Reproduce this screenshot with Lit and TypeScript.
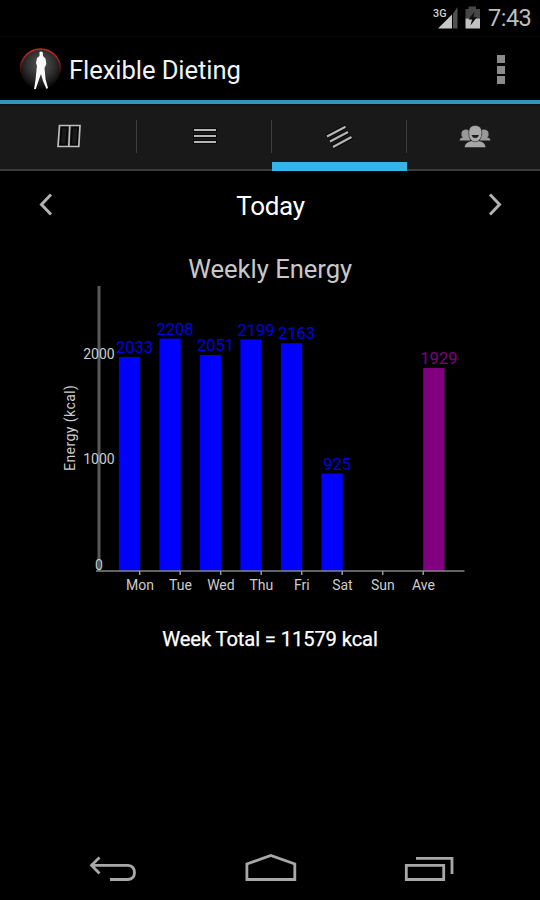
import { LitElement, html, svg, css } from "lit";
import { customElement, property } from "lit/decorators.js";

interface Bar {
  day: string;
  kcal: number;
  average?: boolean;
}

const WEEK: Bar[] = [
  { day: "Mon", kcal: 2033 },
  { day: "Tue", kcal: 2208 },
  { day: "Wed", kcal: 2051 },
  { day: "Thu", kcal: 2199 },
  { day: "Fri", kcal: 2163 },
  { day: "Sat", kcal: 925 },
  { day: "Sun", kcal: 0 },
  { day: "Ave", kcal: 1929, average: true },
];

@customElement("status-bar")
class StatusBar extends LitElement {
  static styles = css`
    :host {
      display: flex;
      justify-content: flex-end;
      align-items: center;
      height: 37px;
      box-sizing: border-box;
      padding-right: 8px;
      border-bottom: 1px solid #070707;
      color: #bebebe;
      font-size: 23.5px;
      line-height: 37px;
    }
    .icons { display: block; flex: none; }
    .net { font-size: 11.5px; font-weight: 500; fill: #d0d0d0; }
    .time { width: 44px; margin-left: 6px; letter-spacing: -0.5px; white-space: nowrap; }
  `;
  render() {
    return html`
      <svg class="icons" width="50" height="37" viewBox="432 0 50 37">
        <path d="M438 28.5 452 14.5V28.5Z" fill="#c6c6c6" />
        <path d="M453 13.5 457.5 7V28.5H453Z" fill="#505050" />
        <text class="net" x="433" y="16.500" textLength="13.500" lengthAdjust="spacingAndGlyphs">3G</text>
        <path d="M465.500 9H468.500V6.500H476V9H480V18.500H465.500Z" fill="#464646" />
        <path d="M465.500 18.500H480V28.500H465.500Z" fill="#c2c2c2" />
        <path d="M474.500 11.500 468.500 19.500H472L470.500 25.500 477 17H473.500Z" fill="#101010" />
      </svg>
      <span class="time">7:43</span>
    `;
  }
}

@customElement("title-bar")
class TitleBar extends LitElement {
  static styles = css`
    :host {
      display: flex;
      align-items: center;
      height: 67px;
      box-sizing: border-box;
      border-bottom: 4px solid #3197b8;
      padding: 0 35px 0 19px;
      color: #f2f2f2;
      font-size: 25.6px;
    }
    .logo { display: block; flex: none; }
    .name { flex: 1; margin-left: 7px; padding-top: 3px; letter-spacing: -0.08px; white-space: nowrap; }
    .more { display: grid; gap: 2.5px; padding-top: 2px; }
    .dot { width: 8px; height: 8px; background: #8b8b8b; }
  `;
  render() {
    return html`
      <svg class="logo" width="43" height="46" viewBox="19 46 43 46">
        <defs>
          <radialGradient id="disc" cx=".5" cy=".38" r=".62">
            <stop offset="0" stop-color="#565656" />
            <stop offset=".55" stop-color="#303030" />
            <stop offset="1" stop-color="#060606" />
          </radialGradient>
          <linearGradient id="rim" x1="0" y1="0" x2="0" y2="1">
            <stop offset="0" stop-color="#c92a28" />
            <stop offset=".35" stop-color="#851a1a" />
            <stop offset=".75" stop-color="#200" stop-opacity="0" />
          </linearGradient>
        </defs>
        <circle cx="40.500" cy="69" r="20" fill="url(#disc)" stroke="url(#rim)" stroke-width="1.600" />
        <path
          d="M39.500 52Q41.500 51 42.800 52.500L43 56 45.500 58.500 46.300 64 44.500 68 45 73 45.500 79 48 88 46.500 89 43 81 41 74 38.800 80 35.800 89 34 89.300 35.500 80 36.500 70 37 66 36 63 37 58 39.500 56Z"
          fill="#fafafa"
        />
      </svg>
      <span class="name">Flexible Dieting</span>
      <div class="more"><div class="dot"></div><div class="dot"></div><div class="dot"></div></div>
    `;
  }
}

@customElement("tab-strip")
class TabStrip extends LitElement {
  @property({ type: Number }) selected = 2;

  static styles = css`
    :host {
      display: grid;
      grid-template-columns: repeat(4, 1fr);
      height: 67px;
      box-sizing: border-box;
      border-bottom: 2px solid #3c3c3c;
      background: linear-gradient(#0c0e0f, #191919 3px);
    }
    .tab { position: relative; display: flex; justify-content: center; padding: 16px 0 0 5px; }
    .tab + .tab::before {
      content: "";
      position: absolute;
      left: 1px;
      top: 16px;
      width: 1px;
      height: 33px;
      background: #3d3d3d;
    }
    .tab.on::after {
      content: "";
      position: absolute;
      left: 2px;
      right: -1.5px;
      bottom: -2px;
      height: 9px;
      background: #33b5e5;
    }
    svg { display: block; }
  `;
  render() {
    const icons = [
      svg`<g fill="none" stroke="#bcbcbc" stroke-width="1.700">
        <path d="M9.500 8.500 8.300 25.500H14.200L15.300 8.500ZM20.200 8.500 19.200 25.500H25L26 8.500Z" stroke="#070707" stroke-width="1.500" />
        <path d="M7.500 6.500H28L26.800 27.500H6Z M17.800 6.500 16.800 27.500" />
      </g>`,
      svg`<path d="M6 11H30M6 17H30M6 23H30" stroke="#0a0a0a" stroke-width="4" />
        <path d="M7 11H29M7 17H29M7 23H29" stroke="#b5b5b5" stroke-width="2" />`,
      svg`<path d="M4.500 17.500 24 7.500M7.500 22.500 26.500 13M10.500 28 30 18" stroke="#0a0a0a" stroke-width="4.500" />
        <path d="M5 17.500 23.500 7.700M8 22.500 26 13M11 28 29.500 18" stroke="#b5b5b5" stroke-width="2.200" />`,
      svg`<g fill="#999">
        <path d="M2.500 21.500Q3 18.500 6 18.500L4.500 17Q3.500 10.500 9 10.500Q13 10.500 13 16V21.500Z" />
        <path d="M33.500 21.500Q33 18.500 30 18.500L31.500 17Q32.500 10.500 27 10.500Q23 10.500 23 16V21.500Z" />
        <path d="M7.500 28.200Q8.500 23 15 22H21.500Q28 23 28.500 28.200Z" fill="#a6a6a6" />
        <path d="M18.200 6.500Q24.800 6.500 24.800 13.500Q24.800 22.800 18.200 22.800Q11.700 22.800 11.700 13.500Q11.700 6.500 18.200 6.500Z" fill="#a9a9a9" stroke="#222" stroke-width=".6" />
        <path d="M14.500 16H22Q21 19 18.200 19Q15.500 19 14.500 16Z" fill="#1c1c1c" />
      </g>`,
    ];
    return html`${icons.map(
      (icon, i) => html`<div class="tab ${i === this.selected ? "on" : ""}">
        <svg width="36" height="34" viewBox="0 1 36 34">${icon}</svg>
      </div>`
    )}`;
  }
}

@customElement("day-picker")
class DayPicker extends LitElement {
  static styles = css`
    :host {
      display: flex;
      justify-content: space-between;
      align-items: center;
      height: 68px;
      padding: 0 37px 0 38px;
      color: #fff;
      font-size: 26px;
    }
    svg { display: block; }
    .label { padding-top: 1px; letter-spacing: -0.3px; }
  `;
  render() {
    return html`
      <svg width="16" height="24" viewBox="0 0 16 24"><path d="M13 1.500 3.500 11.500 13 21.500" fill="none" stroke="#b2b2b2" stroke-width="3" /></svg>
      <span class="label">Today</span>
      <svg width="16" height="24" viewBox="0 0 16 24"><path d="M3 1.500 12.500 11.500 3 21.500" fill="none" stroke="#b2b2b2" stroke-width="3" /></svg>
    `;
  }
}

@customElement("week-chart")
class WeekChart extends LitElement {
  @property({ attribute: false }) bars: Bar[] = [];

  static styles = css`
    :host { display: block; }
    svg { display: block; }
    text { font-family: Roboto, sans-serif; text-anchor: middle; }
    .title { font-size: 25.6px; fill: #c8c8c8; }
    .label { font-size: 14px; fill: #cccccc; }
    .value { font-size: 16.5px; fill: #0000e0; }
    .value.average { fill: #800080; }
    .bar { fill: #0000ff; }
    .bar.average { fill: #800080; }
  `;
  render() {
    const base = 571;
    const perKcal = 0.1053;
    const tick = (i: number) => 139.7 + i * 40.5;
    return html`<svg width="540" height="365" viewBox="0 239 540 365">
      <text class="title" x="270.2" y="278" textLength="164">Weekly Energy</text>
      <text class="label" transform="translate(75 428) rotate(-90)" textLength="86">Energy (kcal)</text>
      ${this.bars.map((b, i) => {
        const h = b.kcal * perKcal;
        const kind = b.average ? "average" : "";
        const left = b.average ? tick(i) : tick(i) - 20.8;
        return b.kcal
          ? svg`<rect class="bar ${kind}" x=${left} y=${base - h} width="21.3" height=${h} />
              <text class="value ${kind}" x=${left + 15.7} y=${base - h - 3.8}>${b.kcal}</text>`
          : null;
      })}
      <path d="M99 286V571" stroke="#595959" stroke-width="3" />
      <path d="M96 571H464.500" stroke="#858585" stroke-width="1.500" />
      ${this.bars.map(
        (b, i) => svg`<path d="M${tick(i)} 571V575" stroke="#999" stroke-width="1.500" />
          <text class="label" x=${tick(i) + 0.2} y="590">${b.day}</text>`
      )}
      ${[2000, 1000, 0].map(
        (v) => svg`<text class="label" x="99" y=${base - 1.3 - v * perKcal}>${v}</text>`
      )}
    </svg>`;
  }
}

@customElement("system-keys")
class SystemKeys extends LitElement {
  static styles = css`
    :host { display: flex; justify-content: space-between; padding: 0 85px 15px 88px; }
    svg { display: block; }
  `;
  render() {
    return html`
      <svg width="50" height="32" viewBox="88 853 50 32" fill="none" stroke="#a8a8a8" stroke-width="2.800">
        <path d="M99.500 857.500 91.500 865.300 99.500 873.500M92 865.300H128Q134.500 865.800 134.500 872.500Q134.500 879 128 879.500H110" />
      </svg>
      <svg width="54" height="32" viewBox="243.500 853 54 32" fill="none" stroke="#a8a8a8" stroke-width="2.800">
        <path d="M246.400 879.500V864L270.300 855.500 294.300 864V879.500Z" />
      </svg>
      <svg width="52" height="32" viewBox="403 853 52 32" fill="none" stroke="#a8a8a8" stroke-width="2.800">
        <path d="M406.300 865.300H443.700V879.500H406.300ZM416 858.300H452V874" />
      </svg>
    `;
  }
}

@customElement("app-root")
class AppRoot extends LitElement {
  static styles = css`
    :host {
      display: flex;
      flex-direction: column;
      height: 900px;
      overflow: hidden;
      background: #000;
      color: #fff;
      font-family: Roboto, sans-serif;
    }
    .total {
      margin-top: 21px;
      text-align: center;
      font-size: 20.2px;
      line-height: 28px;
      letter-spacing: -0.12px;
      -webkit-text-stroke: 0.25px #fff;
    }
    .space { flex: 1; }
  `;
  render() {
    return html`
      <status-bar></status-bar>
      <title-bar></title-bar>
      <tab-strip></tab-strip>
      <day-picker></day-picker>
      <week-chart .bars=${WEEK}></week-chart>
      <div class="total">Week Total = 11579 kcal</div>
      <div class="space"></div>
      <system-keys></system-keys>
    `;
  }
}
